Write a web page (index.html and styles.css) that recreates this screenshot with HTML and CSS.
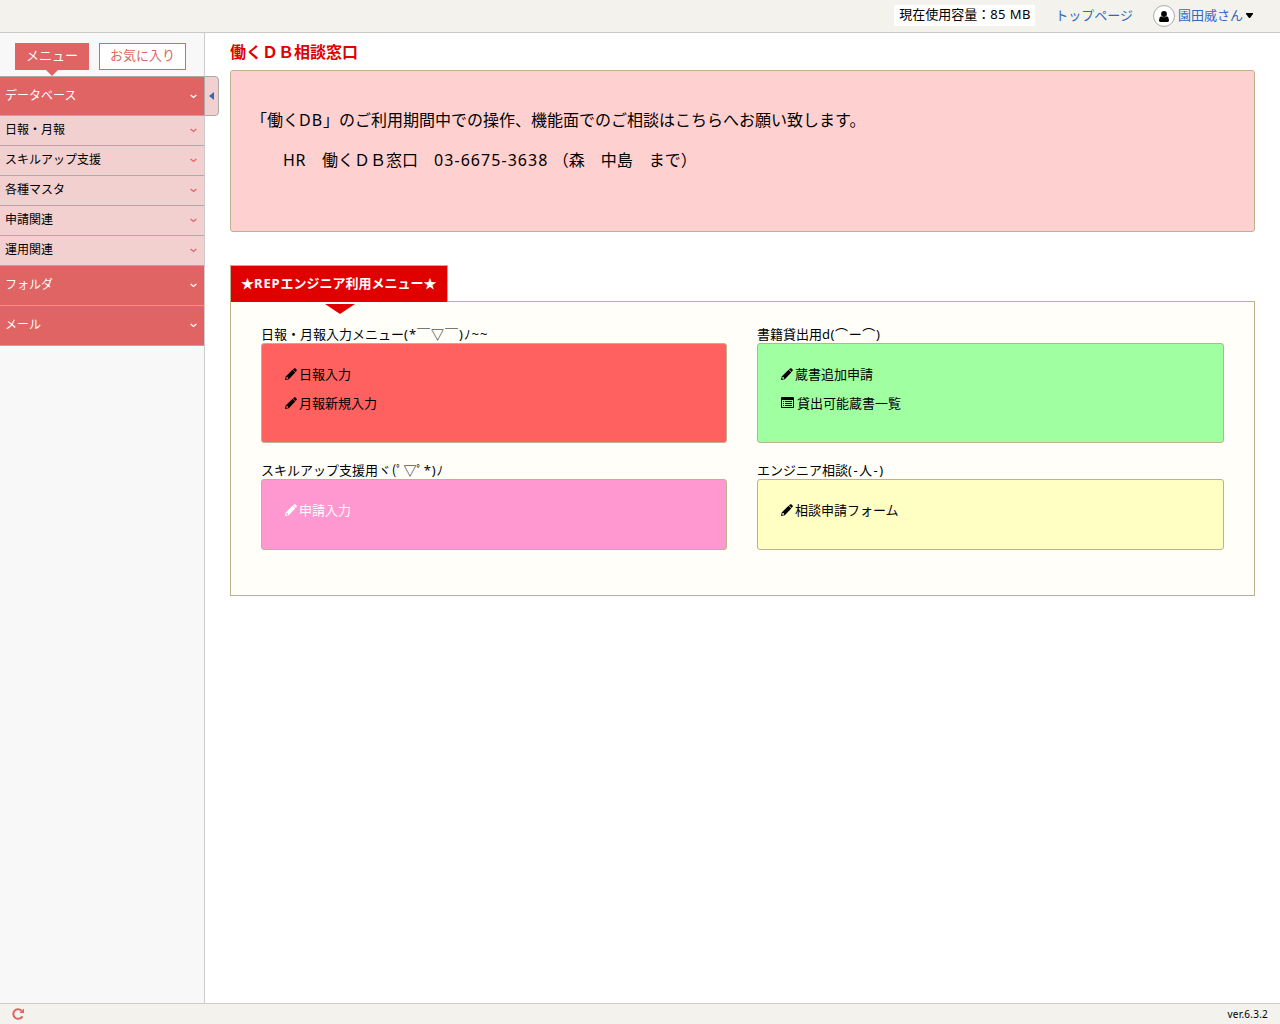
FILE: index.html
```html
<!DOCTYPE html>
<html lang="ja">
<head>
<meta charset="utf-8">
<title>働くＤＢ相談窓口</title>
<link rel="stylesheet" href="styles.css">
</head>
<body>
<svg width="0" height="0" class="defs">
  <symbol id="pencil" viewBox="0 0 12 12"><path fill="currentColor" fill-rule="evenodd" d="M8 1.4 9 .5Q9.8-.1 10.6.6L11.5 1.5Q12.1 2.3 11.4 3.1L10.7 3.9ZM7.5 1.8 10.3 4.5 3.8 11.2 0 12 .7 8.5ZM1.5 8.9 1.1 10.2 1.9 10.9 3.1 10.6 2.9 9.3Z"/></symbol>
  <symbol id="list" viewBox="0 0 13 11"><path fill="currentColor" fill-rule="evenodd" d="M1 0H12Q13 0 13 1V10Q13 11 12 11H1Q0 11 0 10V1Q0 0 1 0ZM1 3V10H12V3ZM2 4H3V5H2ZM4 4H11V5H4ZM2 6H3V7H2ZM4 6H11V7H4ZM2 8H3V9H2ZM4 8H11V9H4Z"/></symbol>
  <symbol id="chev" viewBox="0 0 7 5"><path fill="none" stroke="currentColor" stroke-width="1.3" d="M.6.9 3.5 3.4 6.4.9"/></symbol>
</svg>
<div class="app">
  <header class="top">
    <span class="usage">現在使用容量：<span class="amount">85 MB</span></span>
    <a class="toplink">トップページ</a>
    <a class="user"><span class="avatar"><svg width="10" height="11" viewBox="0 0 10 11"><circle cx="5" cy="3" r="2.9"/><path d="M2 5.2Q5 7.4 8 5.2Q10 6 10 9.5Q9.8 11 8.5 11H1.5Q.2 11 0 9.5Q0 6 2 5.2Z"/></svg></span>園田威さん<svg class="caret" width="7" height="5" viewBox="0 0 7 5"><path d="M0 0H7V1L4 5H3L0 1Z"/></svg></a>
  </header>
  <div class="middle">
    <nav class="side">
      <div class="tabs"><span class="tab on">メニュー</span><span class="tab">お気に入り</span></div>
      <div class="group first">データベース<svg class="chev"><use href="#chev"/></svg></div>
      <div class="entry">日報・月報<svg class="chev"><use href="#chev"/></svg></div>
      <div class="entry">スキルアップ支援<svg class="chev"><use href="#chev"/></svg></div>
      <div class="entry">各種マスタ<svg class="chev"><use href="#chev"/></svg></div>
      <div class="entry">申請関連<svg class="chev"><use href="#chev"/></svg></div>
      <div class="entry">運用関連<svg class="chev"><use href="#chev"/></svg></div>
      <div class="group">フォルダ<svg class="chev"><use href="#chev"/></svg></div>
      <div class="group">メール<svg class="chev"><use href="#chev"/></svg></div>
      <div class="toggle"><svg width="5" height="8" viewBox="0 0 5 8"><path d="M5 0V8L0 4Z"/></svg></div>
    </nav>
    <main class="main">
      <h1 class="title">働くＤＢ相談窓口</h1>
      <section class="notice">
        <p class="line">「働く<span class="db">DB</span>」のご利用期間中での操作、機能面でのご相談はこちらへお願い致します。</p>
        <p class="line second"><span class="hr">HR</span>　働くＤＢ窓口　<span class="tel">03-6675-3638</span> （森　中島　まで）</p>
      </section>
      <div class="ptab">★<span class="rep">REP</span>エンジニア利用メニュー★</div>
      <section class="panel">
        <div class="cell">
          <div class="cap">日報・月報入力メニュー<span class="face1">(*￣▽￣)ﾉ~~</span></div>
          <div class="box red">
            <a class="item"><svg class="pen"><use href="#pencil"/></svg>日報入力</a>
            <a class="item"><svg class="pen"><use href="#pencil"/></svg>月報新規入力</a>
          </div>
        </div>
        <div class="cell">
          <div class="cap">書籍貸出用<span class="face2">d(⌒ー⌒)</span></div>
          <div class="box green">
            <a class="item"><svg class="pen"><use href="#pencil"/></svg>蔵書追加申請</a>
            <a class="item"><svg class="lst"><use href="#list"/></svg>貸出可能蔵書一覧</a>
          </div>
        </div>
        <div class="cell">
          <div class="cap">スキルアップ支援用<span class="face3">ヾ(ﾟ▽ﾟ*)ﾉ</span></div>
          <div class="box pink">
            <a class="item"><svg class="pen"><use href="#pencil"/></svg>申請入力</a>
          </div>
        </div>
        <div class="cell">
          <div class="cap">エンジニア相談<span class="face4">(-人-)</span></div>
          <div class="box yellow">
            <a class="item"><svg class="pen"><use href="#pencil"/></svg>相談申請フォーム</a>
          </div>
        </div>
      </section>
    </main>
  </div>
  <footer class="foot">
    <svg width="12" height="12" viewBox="0 0 12 12"><path fill="none" stroke="#e06464" stroke-width="2" d="M9.6 2.7A4.8 4.8 0 1 0 10.4 8.2"/><path fill="#e06464" d="M12 .4V5H7.3Z"/></svg>
    <span class="ver">ver.6.3.2</span>
  </footer>
</div>
</body>
</html>
```
FILE: styles.css
```css
* { box-sizing: border-box; }
body { margin: 0; font: 13px/20px "Noto Sans", "Noto Sans CJK JP", sans-serif; color: #000; background: #fff; }
p, h1 { margin: 0; }
svg { flex: none; }
.defs { display: block; position: absolute; }
.app { height: 1024px; display: grid; grid-template-rows: 33px 970px 21px; }
.top { background: #f4f2ed; border-bottom: 1px solid #ccc9c5; display: flex; justify-content: flex-end; align-items: flex-start; padding: 5px 27px 0 0; white-space: nowrap; }
.usage { background: #fff; width: 141px; height: 21px; padding-left: 5px; line-height: 19px; margin-right: 20px; }
.amount { letter-spacing: .4px; }
.toplink { color: #2e68c0; margin-right: 20px; }
.user { color: #2e68c0; display: flex; align-items: center; height: 22px; line-height: 20px; padding-bottom: 2px; }
.avatar { width: 22px; height: 22px; border: 1px solid #aaa; border-radius: 50%; background: #fff; display: flex; align-items: center; justify-content: center; margin: 2px 3px 0 0; }
.avatar svg, .caret { fill: #000; }
.caret { margin: 1px 0 0 3px; }
.middle { display: grid; grid-template-columns: 205px 1fr; }
.side { position: relative; background: #f8f8f8; border-right: 1px solid #ccc; font-size: 12px; }
.tabs { display: flex; gap: 10px; padding: 10px 0 0 15px; height: 43px; font-size: 13px; }
.tab { height: 27px; padding: 0 10px; border: 1px solid #e06464; background: #fff; color: #e06464; line-height: 23px; }
.tab.on { position: relative; width: 74px; background: #e06464; color: #fff; }
.tab.on::after { content: ""; position: absolute; left: 30px; top: 26px; border: 6px solid transparent; border-top-color: #e06464; border-bottom: 0; }
.group, .entry { display: flex; align-items: center; justify-content: space-between; padding: 0 7px 0 5px; border-bottom: 1px solid #aaa; }
.group { height: 40px; padding-bottom: 1px; background: #e06464; color: #fff; }
.group.first { border-top: 1px solid #aaa; }
.entry { height: 30px; background: #f3d0d0; padding-bottom: 2px; }
.chev { width: 7px; height: 5px; margin-top: 1px; }
.entry .chev { color: #e06464; }
.toggle { position: absolute; left: 204px; top: 43px; width: 15px; height: 40px; border: 1px solid #aaa; border-radius: 0 4px 4px 0; background: #f3d0d0; display: flex; align-items: center; padding: 0 0 1px 4px; }
.toggle svg { fill: #2e68c0; }
.main { padding: 7px 25px 0; }
.title { font-size: 16px; line-height: 24px; font-weight: bold; color: #e00000; }
.notice { margin-top: 6px; height: 162px; border: 1px solid #bcb38e; border-radius: 3px; background: #ffd0d0; padding: 29px 20px; }
.line { font-size: 16px; line-height: 40px; white-space: pre; }
.second { padding-left: 32px; }
.db { letter-spacing: 1px; }
.hr { letter-spacing: .6px; }
.tel { letter-spacing: 1.05px; }
.ptab { margin-top: 33px; position: relative; z-index: 1; width: 218px; height: 37px; border: 1px solid #bcb38e; border-bottom: 0; background: #e00000; color: #fff; font-weight: bold; line-height: 34px; padding-left: 10px; white-space: nowrap; }
.rep { letter-spacing: .9px; }
.ptab::after { content: ""; position: absolute; left: 94px; top: 38px; border: 15px solid transparent; border-top: 10px solid #e00000; border-bottom: 0; }
.panel { margin-top: -1px; height: 295px; border: 1px solid #bcb38e; background: #fffef9; padding: 22px 30px 0; display: grid; grid-template-columns: 466px 467px; grid-template-rows: 119px 90px; column-gap: 30px; row-gap: 17px; }
.cap { height: 19px; line-height: 21px; white-space: nowrap; }
.face1 { letter-spacing: 1px; }
.face2 { letter-spacing: .6px; }
.face3 { letter-spacing: .8px; }
.face4 { letter-spacing: 1.5px; }
.box { border: 1px solid #bcb38e; border-radius: 3px; padding: 15px 23px 25px; }
.item { display: flex; align-items: center; height: 29px; gap: 3px; }
.pen { width: 12px; height: 12px; margin-right: -1px; margin-top: 1px; }
.lst { width: 13px; height: 11px; }
.red { background: #ff6060; }
.green { background: #a0ffa0; }
.pink { background: #ff98d0; color: #fff; }
.yellow { background: #ffffc4; }
.foot { background: #f4f2ed; border-top: 1px solid #ccc; display: flex; justify-content: space-between; align-items: center; padding: 0 12px; font-size: 10px; }
.ver { letter-spacing: .22px; }
```
